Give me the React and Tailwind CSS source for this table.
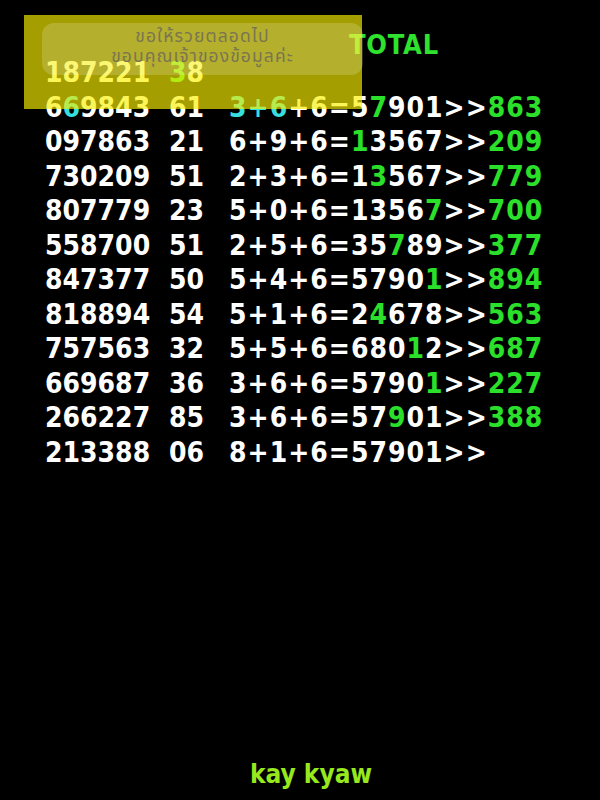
import React from 'react';

const G = 'text-[#2be02b]';
const C = 'text-[#36dede]';

// each part: [text, color?]
const rows = [
  { a: [['187221']], b: [['3', G], ['8']], c: [] },
  { a: [['6'], ['6', C], ['9843']], b: [['61']], c: [['3+6', C], ['+6=5'], ['7', G], ['901>>'], ['863', G]] },
  { a: [['097863']], b: [['21']], c: [['6+9+6='], ['1', G], ['3567>>'], ['209', G]] },
  { a: [['730209']], b: [['51']], c: [['2+3+6=1'], ['3', G], ['567>>'], ['779', G]] },
  { a: [['807779']], b: [['23']], c: [['5+0+6=1356'], ['7', G], ['>>'], ['700', G]] },
  { a: [['558700']], b: [['51']], c: [['2+5+6=35'], ['7', G], ['89>>'], ['377', G]] },
  { a: [['847377']], b: [['50']], c: [['5+4+6=5790'], ['1', G], ['>>'], ['894', G]] },
  { a: [['818894']], b: [['54']], c: [['5+1+6=2'], ['4', G], ['678>>'], ['563', G]] },
  { a: [['757563']], b: [['32']], c: [['5+5+6=680'], ['1', G], ['2>>'], ['687', G]] },
  { a: [['669687']], b: [['36']], c: [['3+6+6=5790'], ['1', G], ['>>'], ['227', G]] },
  { a: [['266227']], b: [['85']], c: [['3+6+6=57'], ['9', G], ['01>>'], ['388', G]] },
  { a: [['213388']], b: [['06']], c: [['8+1+6=57901>>']] },
];

const Parts = ({ parts }) => (
  <>
    {parts.map(([t, cls], i) => (
      <span key={i} className={cls || 'text-white'}>{t}</span>
    ))}
  </>
);

const App = () => {
  return (
    <div
      className="relative w-[600px] h-[800px] bg-black overflow-hidden flex flex-col font-bold"
      style={{ fontFamily: '"DejaVu Sans Condensed", "DejaVu Sans", Verdana, sans-serif' }}
    >
      <div className="pt-[33px] pl-[349px] h-[56px] text-[27px] leading-[24px] text-[#2ee22e] tracking-[0.8px]">
        TOTAL
      </div>

      <div className="pl-[45px] text-[28px] leading-[34.5px]">
        {rows.map((r, i) => (
          <div key={i} className="grid grid-cols-[124px_60px_auto]">
            <div><Parts parts={r.a} /></div>
            <div><Parts parts={r.b} /></div>
            <div className="tracking-[1px]"><Parts parts={r.c} /></div>
          </div>
        ))}
      </div>

      <div className="flex-1" />

      <div className="pb-[11px] pl-[22px] text-center text-[26px] leading-[30px] text-[#97e81c]">
        kay kyaw
      </div>

      {/* notification toast over the top rows */}
      <div className="absolute left-[24px] top-[15px] w-[338px] h-[94px] bg-[rgba(250,240,0,0.66)]" />
      <div
        className="absolute left-[42px] top-[23px] w-[321px] h-[52px] rounded-xl bg-[rgba(255,255,255,0.18)] flex flex-col items-center pt-[4px] text-[17.5px] leading-[20px] tracking-[1.1px] font-normal text-[#7a7550]"
        style={{ fontFamily: '"Noto Sans Thai", Tahoma, "DejaVu Sans", sans-serif' }}
      >
        <div>ขอให้รวยตลอดไป</div>
        <div>ขอบคุณเจ้าของข้อมูลค่ะ</div>
      </div>
    </div>
  );
};

export default App;
